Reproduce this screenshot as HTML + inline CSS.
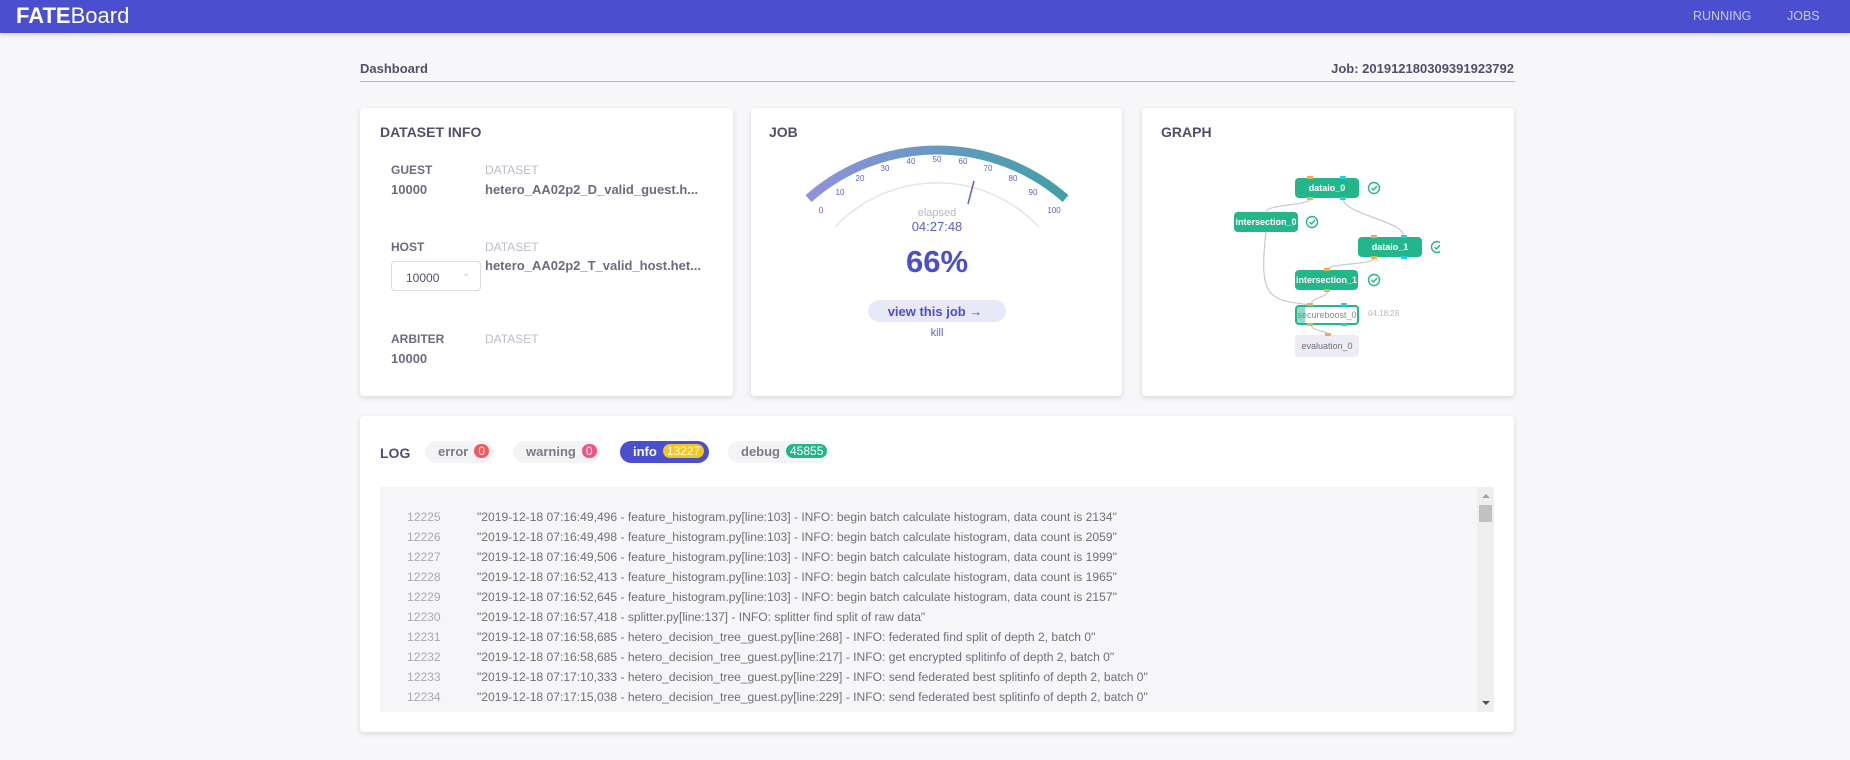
<!DOCTYPE html>
<html><head><meta charset="utf-8">
<style>
*{margin:0;padding:0;box-sizing:border-box}
body{width:1850px;height:760px;background:#f7f7f9;font-family:"Liberation Sans",Arial,sans-serif;position:relative;overflow:hidden;color:#534c6b}
.a{position:absolute;white-space:nowrap}
.hdr{position:absolute;left:0;top:0;width:1850px;height:33px;background:#4a4fcf;box-shadow:0 2px 4px rgba(0,0,0,.15)}
.card{position:absolute;background:#fff;border-radius:4px;box-shadow:0 2px 6px rgba(0,0,0,.12)}
.ttl{font-size:14px;font-weight:bold;color:#534c6b}
.lab{font-size:12px;font-weight:bold;color:#6f6a80}
.ds{font-size:12px;color:#bcbcc8}
.val{font-size:13px;font-weight:bold;color:#6f6a80}
.chip{position:absolute;top:441px;height:22px;border-radius:11px;background:#f4f4f7;font-size:13px;font-weight:bold;color:#7a7a88;line-height:22px;padding-left:13px}
.bdg{display:inline-block;height:14px;line-height:14px;border-radius:7px;color:#fff;font-size:12px;font-weight:normal;padding:0 4px;margin-left:6px;vertical-align:1px}
.ln{position:absolute;left:380px;font-size:12.1px;color:#6f6f7c;white-space:nowrap}
.ln span{display:inline-block;width:97px;padding-left:27px;color:#a8a8b4}
.node{position:absolute;height:20px;border-radius:4px;background:#24b68b;color:#fff;font-size:9px;font-weight:bold;text-align:center;line-height:20px;overflow:hidden}
</style></head><body>
<div class="hdr">
 <div class="a" style="left:16px;top:3px;font-size:22px;color:#fff"><b>FATE</b>Board</div>
 <div class="a" style="left:1693px;top:9px;font-size:12.5px;color:#c8c9f0">RUNNING</div>
 <div class="a" style="left:1787px;top:9px;font-size:12.5px;color:#c8c9f0">JOBS</div>
</div>
<div class="a" style="left:360px;top:61px;font-size:13px;font-weight:bold;color:#534c6b">Dashboard</div>
<div class="a" style="right:336px;top:61px;font-size:13px;font-weight:bold;color:#534c6b">Job: 201912180309391923792</div>
<div class="a" style="left:360px;top:81px;width:1155px;height:1px;background:#b8b6c4"></div>

<div class="card" style="left:360px;top:108px;width:373px;height:288px">
 <div class="a ttl" style="left:20px;top:16px">DATASET INFO</div>
 <div class="a lab" style="left:31px;top:55px">GUEST</div>
 <div class="a ds" style="left:125px;top:55px">DATASET</div>
 <div class="a val" style="left:31px;top:74px">10000</div>
 <div class="a val" style="left:125px;top:74px">hetero_AA02p2_D_valid_guest.h...</div>
 <div class="a lab" style="left:31px;top:132px">HOST</div>
 <div class="a ds" style="left:125px;top:132px">DATASET</div>
 <div class="a" style="left:31px;top:153px;width:90px;height:30px;border:1px solid #dcdce4;border-radius:4px;font-size:12px;color:#534c6b;padding:9px 0 0 14px">10000<span style="position:absolute;left:70px;top:6px;color:#c0c0c8;font-size:10px">&#8964;</span></div>
 <div class="a val" style="left:125px;top:150px">hetero_AA02p2_T_valid_host.het...</div>
 <div class="a lab" style="left:31px;top:224px">ARBITER</div>
 <div class="a ds" style="left:125px;top:224px">DATASET</div>
 <div class="a val" style="left:31px;top:243px">10000</div>
</div>

<div class="card" style="left:751px;top:108px;width:371px;height:288px">
 <div class="a ttl" style="left:18px;top:16px">JOB</div>
</div>
<svg class="a" style="left:751px;top:108px" width="371" height="288" viewBox="751 108 371 288">
 <defs><linearGradient id="g" x1="0" x2="1"><stop offset="0" stop-color="#8f92dd"/><stop offset="1" stop-color="#40a0a6"/></linearGradient></defs>
 <path d="M808.5 198.6 A194 194 0 0 1 1065.5 198.6" fill="none" stroke="url(#g)" stroke-width="9"/>
 <path d="M835 227 A140 140 0 0 1 1039 227" fill="none" stroke="#e4e4ee" stroke-width="1.5"/>
 <line x1="974" y1="181" x2="968" y2="204" stroke="#5a5fd0" stroke-width="1.5"/>
 <g font-size="8" fill="#5a5fd0" text-anchor="middle" font-family="Liberation Sans">
  <text x="821" y="213">0</text><text x="840" y="195">10</text><text x="860" y="181">20</text>
  <text x="885" y="171">30</text><text x="911" y="164">40</text><text x="937" y="162">50</text>
  <text x="963" y="164">60</text><text x="988" y="171">70</text><text x="1013" y="181">80</text>
  <text x="1033" y="195">90</text><text x="1054" y="213">100</text>
 </g>
 <text x="937" y="216" font-size="11" fill="#b8b8c4" text-anchor="middle" font-family="Liberation Sans">elapsed</text>
 <text x="937" y="231" font-size="13" fill="#5a5fd0" text-anchor="middle" font-family="Liberation Sans">04:27:48</text>
 <text x="937" y="272" font-size="31" font-weight="bold" fill="#4a4fcf" text-anchor="middle" font-family="Liberation Sans">66%</text>
 <rect x="868" y="300" width="138" height="22" rx="11" fill="#e8e9f8"/>
 <text x="935" y="316" font-size="13" font-weight="bold" fill="#4a4fcf" text-anchor="middle" font-family="Liberation Sans">view this job →</text>
 <text x="937" y="336" font-size="11" fill="#5a5fd0" text-anchor="middle" font-family="Liberation Sans">kill</text>
</svg>

<div class="card" style="left:1142px;top:108px;width:372px;height:288px">
 <div class="a ttl" style="left:19px;top:16px">GRAPH</div>
</div>
<svg class="a" style="left:1142px;top:108px" width="372" height="288" viewBox="1142 108 372 288">
 <g fill="none" stroke="#c8c8d0" stroke-width="1.2">
  <path d="M1311 198 C1311 206 1266 204 1266 212"/>
  <path d="M1343 198 C1343 215 1404 220 1404 237"/>
  <path d="M1266 232 C1258 300 1270 300 1311 305"/>
  <path d="M1375 257 C1375 266 1328 262 1328 270"/>
  <path d="M1328 290 C1328 298 1311 297 1311 305"/>
  <path d="M1311 324 C1311 332 1328 330 1328 335"/>
 </g>
</svg>
<div class="node" style="left:1295px;top:178px;width:64px">dataio_0</div>
<div class="node" style="left:1234px;top:212px;width:64px">intersection_0</div>
<div class="node" style="left:1358px;top:237px;width:64px">dataio_1</div>
<div class="node" style="left:1295px;top:270px;width:63px">intersection_1</div>
<div class="node" style="left:1295px;top:305px;width:64px;background:#fff;border:2px solid #24b68b;color:#888;line-height:16px;font-weight:normal">secureboost_0</div>
<div class="a" style="left:1297px;top:307px;width:8px;height:16px;background:rgba(36,182,139,.5)"></div>
<div class="a" style="left:1368px;top:309px;font-size:8px;color:#b8b8c4">04:18:28</div>
<div class="node" style="left:1295px;top:335px;width:64px;background:#ececf2;color:#6f6f7c;height:22px;line-height:22px;font-weight:normal">evaluation_0</div>
<svg class="a" style="left:1290px;top:172px" width="150" height="190" viewBox="1290 172 150 190">
 <g fill="#e8b04f"><rect x="1307" y="176" width="6" height="3"/><rect x="1307" y="197" width="6" height="3"/><rect x="1262" y="210" width="6" height="3"/><rect x="1262" y="231" width="6" height="3"/><rect x="1371" y="235" width="6" height="3"/><rect x="1371" y="256" width="6" height="3"/><rect x="1324" y="268" width="6" height="3"/><rect x="1324" y="289" width="6" height="3"/><rect x="1307" y="303" width="6" height="3"/><rect x="1307" y="323" width="6" height="3"/><rect x="1325" y="333" width="6" height="3"/></g>
 <g fill="#1ecff0"><rect x="1340" y="176" width="6" height="3"/><rect x="1340" y="197" width="6" height="3"/><rect x="1401" y="235" width="6" height="3"/><rect x="1401" y="256" width="6" height="3"/><rect x="1341" y="303" width="6" height="3"/><rect x="1341" y="323" width="6" height="3"/></g>
 <g fill="none" stroke="#24b68b" stroke-width="1.4">
  <circle cx="1374" cy="188" r="5.5"/><path d="M1371.5 188 l2 2 l3.5 -4"/>
  <circle cx="1437" cy="247" r="5.5"/><path d="M1434.5 247 l2 2 l3.5 -4"/>
  <circle cx="1374" cy="280" r="5.5"/><path d="M1371.5 280 l2 2 l3.5 -4"/>
 </g>
</svg>
<svg class="a" style="left:1300px;top:210px" width="40" height="30"><g fill="none" stroke="#24b68b" stroke-width="1.4"><circle cx="12" cy="12" r="5.5"/><path d="M9.5 12 l2 2 l3.5 -4"/></g></svg>

<div class="card" style="left:360px;top:416px;width:1154px;height:316px">
 <div class="a ttl" style="left:20px;top:29px">LOG</div>
</div>
<div class="chip" style="left:425px;width:69px">error<span class="bdg" style="background:#f4575c">0</span></div>
<div class="chip" style="left:513px;width:87px">warning<span class="bdg" style="background:#f2527e">0</span></div>
<div class="chip" style="left:620px;width:89px;background:#4a4fcf;color:#fff">info<span class="bdg" style="background:#f7c716">13227</span></div>
<div class="chip" style="left:728px;width:100px">debug<span class="bdg" style="background:#24b68b">45855</span></div>

<div class="a" style="left:380px;top:487px;width:1114px;height:225px;background:#f6f6f8"></div>
<div class="a" style="left:1477px;top:487px;width:17px;height:225px;background:#efeff0"></div>
<div class="a" style="left:1479px;top:505px;width:13px;height:17px;background:#c1c1c1"></div>
<div class="a" style="left:1482px;top:494px;width:0;height:0;border-left:4px solid transparent;border-right:4px solid transparent;border-bottom:4px solid #a3a3a3"></div>
<div class="a" style="left:1482px;top:701px;width:0;height:0;border-left:4px solid transparent;border-right:4px solid transparent;border-top:4px solid #505050"></div>

<div class="ln" style="top:510px"><span>12225</span>"2019-12-18 07:16:49,496 - feature_histogram.py[line:103] - INFO: begin batch calculate histogram, data count is 2134"</div>
<div class="ln" style="top:530px"><span>12226</span>"2019-12-18 07:16:49,498 - feature_histogram.py[line:103] - INFO: begin batch calculate histogram, data count is 2059"</div>
<div class="ln" style="top:550px"><span>12227</span>"2019-12-18 07:16:49,506 - feature_histogram.py[line:103] - INFO: begin batch calculate histogram, data count is 1999"</div>
<div class="ln" style="top:570px"><span>12228</span>"2019-12-18 07:16:52,413 - feature_histogram.py[line:103] - INFO: begin batch calculate histogram, data count is 1965"</div>
<div class="ln" style="top:590px"><span>12229</span>"2019-12-18 07:16:52,645 - feature_histogram.py[line:103] - INFO: begin batch calculate histogram, data count is 2157"</div>
<div class="ln" style="top:610px"><span>12230</span>"2019-12-18 07:16:57,418 - splitter.py[line:137] - INFO: splitter find split of raw data"</div>
<div class="ln" style="top:630px"><span>12231</span>"2019-12-18 07:16:58,685 - hetero_decision_tree_guest.py[line:268] - INFO: federated find split of depth 2, batch 0"</div>
<div class="ln" style="top:650px"><span>12232</span>"2019-12-18 07:16:58,685 - hetero_decision_tree_guest.py[line:217] - INFO: get encrypted splitinfo of depth 2, batch 0"</div>
<div class="ln" style="top:670px"><span>12233</span>"2019-12-18 07:17:10,333 - hetero_decision_tree_guest.py[line:229] - INFO: send federated best splitinfo of depth 2, batch 0"</div>
<div class="ln" style="top:690px"><span>12234</span>"2019-12-18 07:17:15,038 - hetero_decision_tree_guest.py[line:229] - INFO: send federated best splitinfo of depth 2, batch 0"</div>
</body></html>
